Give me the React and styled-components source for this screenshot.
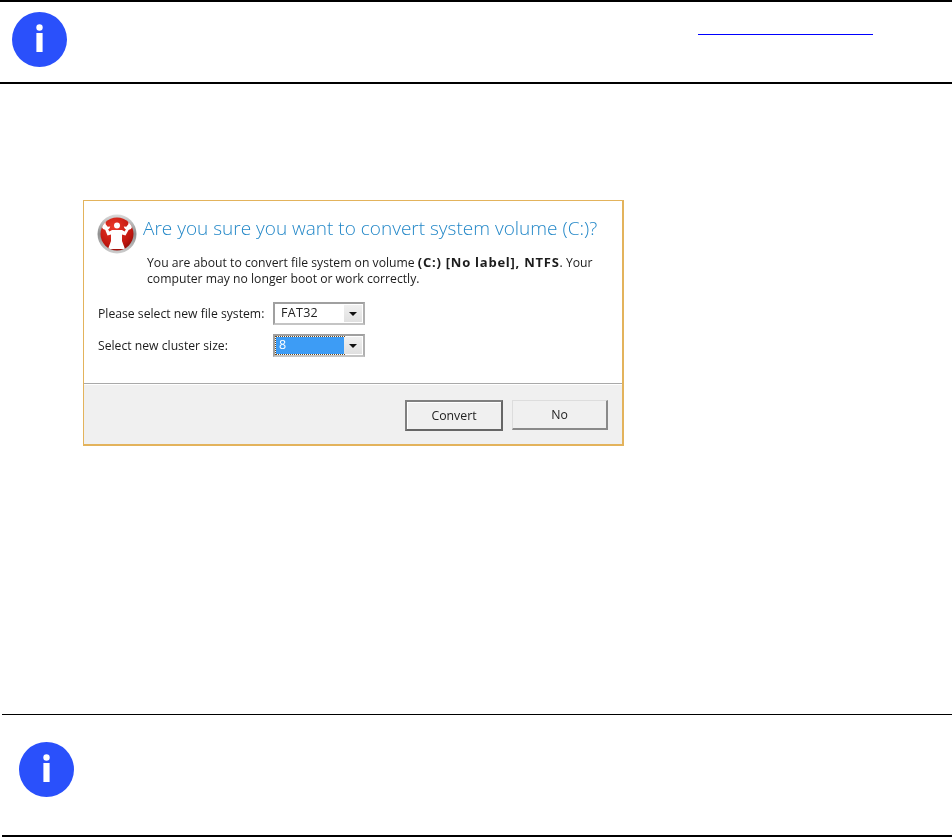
import React from "react";
import styled, { createGlobalStyle } from "styled-components";

const Global = createGlobalStyle`
  html, body { margin: 0; padding: 0; background: #fff; }
  body { font-family: "Open Sans", "Liberation Sans", Arial, sans-serif; color: #000; }
`;
const Page = styled.div`
  width: 952px;
  height: 837px;
  display: flex;
  flex-direction: column;
  overflow: hidden;
`;
const TopNotice = styled.section`
  height: 70px;
  border-top: 2px solid #000;
  border-bottom: 2px solid #000;
  display: flex;
  padding-left: 12px;
  padding-top: 10px;
`;
const TopLink = styled.a`
  display: block;
  width: 175px;
  height: 22px;
  margin-left: 631px;
  border-bottom: 1px solid #0000ff;
`;
const BottomNotice = styled.section`
  margin-top: 268px;
  margin-left: 2px;
  height: 123px;
  border-top: 1px solid #000;
  border-bottom: 2px solid #000;
  padding-left: 17px;
  padding-top: 27px;
  box-sizing: border-box;
`;
const Dialog = styled.div`
  margin-top: 116px;
  margin-left: 83px;
  width: 541px;
  height: 246px;
  box-sizing: border-box;
  border: 1px solid #e3b35c;
  border-right-width: 2px;
  border-bottom-width: 2px;
  display: flex;
  flex-direction: column;
  background: #fff;
  color: #1c1c1c;
  filter: blur(0.3px);
`;
const Body = styled.div`
  flex: 1;
  padding: 13px 13px 0 13px;
`;
const Header = styled.div`
  display: flex;
  align-items: center;
  gap: 6px;
  height: 40px;
`;
const Title = styled.h1`
  margin: 0;
  font-weight: 300;
  font-size: 19px;
  line-height: 24px;
  color: #2488c8;
  white-space: nowrap;
  position: relative;
  top: -6px;
`;
const Message = styled.p`
  margin: 0 0 0 50px;
  font-size: 12.2px;
  line-height: 16px;
  white-space: nowrap;
`;
const Strong = styled.b`
  font-size: 13px;
  line-height: 16px;
  letter-spacing: 0.75px;
`;
const Form = styled.div`
  margin-top: 15px;
  margin-left: 1px;
  display: flex;
  flex-direction: column;
  gap: 9px;
`;
const Row = styled.div`
  display: flex;
  align-items: center;
`;
const Label = styled.span`
  width: 175px;
  font-size: 12.2px;
  white-space: nowrap;
`;
const Combo = styled.div`
  width: 92px;
  height: 23px;
  box-sizing: border-box;
  border: 2px solid #a0a0a0;
  border-right-color: #b0b0b0;
  border-bottom-color: #c4c4c4;
  background: #fff;
  display: flex;
  padding: 1px;
`;
const Value = styled.span`
  flex: 1;
  padding-left: ${p => (p.$selected ? "3px" : "5px")};
  line-height: 15px;
  font-size: 12.5px;
  letter-spacing: 0.3px;
  color: ${p => (p.$selected ? "#fff" : "#222")};
  background: ${p => (p.$selected ? "#3d9cf5" : "transparent")};
  outline: ${p => (p.$selected ? "1px dotted #6b4a20" : "none")};
`;
const Arrow = styled.span`
  width: 18px;
  background: linear-gradient(#f0f0f0, #e0e0e0);
  display: flex;
  align-items: center;
  justify-content: center;
  &::after {
    content: "";
    border-left: 4px solid transparent;
    border-right: 4px solid transparent;
    border-top: 4px solid #111;
  }
`;
const Footer = styled.div`
  height: 61px;
  box-sizing: border-box;
  background: #f0f0f0;
  border-top: 1px solid #a9a9a9;
  box-shadow: inset 0 1px 0 #fff;
  display: flex;
  justify-content: flex-end;
  gap: 9px;
  padding: 16px 14px 0 0;
`;
const Button = styled.button`
  width: ${p => (p.$primary ? "98px" : "96px")};
  height: ${p => (p.$primary ? "31px" : "30px")};
  padding: 0;
  box-sizing: border-box;
  font: 12.3px "Open Sans", "Liberation Sans", Arial, sans-serif;
  color: #222;
  background: #f0f0f0;
  border-style: solid;
  border-width: ${p => (p.$primary ? "2px" : "1px 2px 2px 1px")};
  border-color: ${p => (p.$primary ? "#808080 #666 #666 #808080" : "#ddd #8a8a8a #8a8a8a #ddd")};
  box-shadow: ${p => (p.$primary ? "inset 1px 1px 0 #fff" : "none")};
`;

const InfoIcon = () => (
  <svg width="55" height="55" viewBox="0 0 55 55" style={{ display: "block" }}>
    <circle cx="27.5" cy="27.5" r="27.5" fill="#2a50fb" />
    <circle cx="27.5" cy="15.5" r="3.2" fill="#fff" />
    <rect x="24.4" y="21" width="6.2" height="19" fill="#fff" />
  </svg>
);

const RepairIcon = () => (
  <svg width="40" height="40" viewBox="0 0 40 40" style={{ display: "block", flex: "none" }}>
    <defs>
      <linearGradient id="ring" x1="0" y1="0" x2="0" y2="1">
        <stop offset="0" stopColor="#dcdcdc" />
        <stop offset="0.5" stopColor="#8f8f8f" />
        <stop offset="1" stopColor="#cfcfcf" />
      </linearGradient>
      <radialGradient id="red" cx="0.4" cy="0.3" r="0.8">
        <stop offset="0" stopColor="#ea3a2a" />
        <stop offset="0.7" stopColor="#c0160e" />
        <stop offset="1" stopColor="#860a06" />
      </radialGradient>
      <clipPath id="disc">
        <circle cx="20" cy="20" r="16.5" />
      </clipPath>
    </defs>
    <circle cx="20" cy="20" r="19.5" fill="url(#ring)" />
    <circle cx="20" cy="20" r="16.5" fill="url(#red)" />
    <g clipPath="url(#disc)">
      <circle cx="20" cy="11.5" r="3" fill="#fff" />
      <path d="M15 16h10l2.500 1.500 2.500-3.500 2 1.200-3.500 6.300-3.500-1V27l3 8H11l3-8v-6.500l-3.500 1L8 15.200 10 14l2.500 3.500z" fill="#fff" />
      <path d="M8.500 7.500 A4.200 4.200 0 1 0 13.200 12.500 L10.700 12.800 L8.700 10.200z" fill="#fff" />
      <path d="M31.500 7.500 A4.200 4.200 0 1 1 26.800 12.500 L29.300 12.800 L31.300 10.200z" fill="#fff" />
    </g>
  </svg>
);

export default function App() {
  return (
    <Page>
      <Global />
      <TopNotice>
        <InfoIcon />
        <TopLink />
      </TopNotice>
      <Dialog>
        <Body>
          <Header>
            <RepairIcon />
            <Title>Are you sure you want to convert system volume (C:)?</Title>
          </Header>
          <Message>
            You are about to convert file system on volume <Strong>(C:) [No label], NTFS</Strong>. Your
            <br />
            computer may no longer boot or work correctly.
          </Message>
          <Form>
            <Row>
              <Label>Please select new file system:</Label>
              <Combo>
                <Value>FAT32</Value>
                <Arrow />
              </Combo>
            </Row>
            <Row>
              <Label>Select new cluster size:</Label>
              <Combo>
                <Value $selected>8</Value>
                <Arrow />
              </Combo>
            </Row>
          </Form>
        </Body>
        <Footer>
          <Button $primary>Convert</Button>
          <Button>No</Button>
        </Footer>
      </Dialog>
      <BottomNotice>
        <InfoIcon />
      </BottomNotice>
    </Page>
  );
}
